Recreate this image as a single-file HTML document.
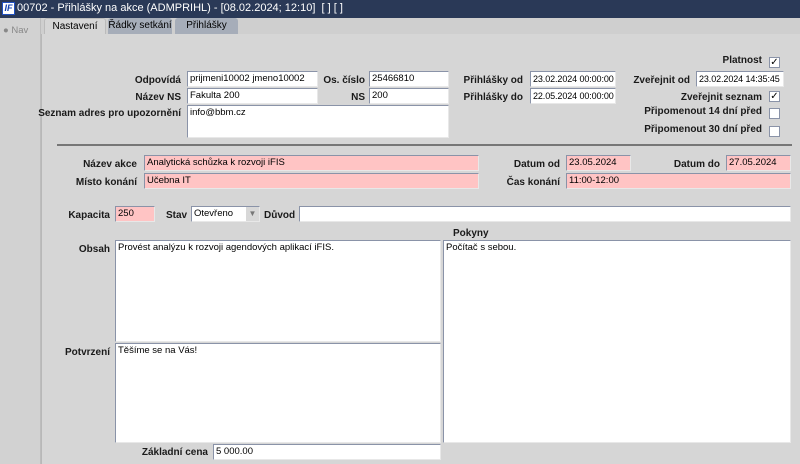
<!DOCTYPE html>
<html><head><meta charset="utf-8"><style>
*{box-sizing:border-box;margin:0;padding:0}
body{width:800px;height:464px;overflow:hidden;background:#d6d6d6;font-family:"Liberation Sans",sans-serif;font-size:10px;color:#000;position:relative}
.a{position:absolute}
.l{position:absolute;font-weight:bold;font-size:10px;text-align:right;white-space:nowrap;color:#1a1a1a}
.i{position:absolute;background:#fff;border:1px solid #8a93a8;border-right-color:#e8e8e8;border-bottom-color:#e8e8e8;font-size:9.5px;padding:1px 2px;white-space:nowrap;overflow:hidden;line-height:12px}
.d{font-size:9px;letter-spacing:-0.1px}
.p{background:#ffc4c4}
.cb{position:absolute;width:11px;height:11px;background:#fff;border:1px solid #8a93a8;font-size:10px;line-height:9px;text-align:center}
.tab{position:absolute;top:18px;height:16px;text-align:center;font-size:10px;line-height:15px;border-radius:3px 3px 0 0;white-space:nowrap}
</style></head><body>
<div class="a" style="left:0;top:0;width:800px;height:18px;background:#2a3957"></div>
<div class="a" style="left:2px;top:2px;width:13px;height:13px;background:#fff;border:1px solid #2050c0;color:#1040b0;font-size:9px;font-weight:bold;font-style:italic;line-height:11px;text-align:center">IF</div>
<div class="a" style="left:17px;top:2px;color:#fff;font-size:11px;white-space:nowrap">00702 - Přihlášky na akce (ADMPRIHL) - [08.02.2024; 12:10] &nbsp;[ ] [ ]</div>
<div class="a" style="left:0;top:18px;width:41px;height:446px;background:#d2d2d2;border-right:1px solid #bdbdbd"></div>
<div class="a" style="left:3px;top:25px;color:#888;font-size:9.5px">● Nav</div>
<div class="a" style="left:41px;top:18px;width:759px;height:16px;background:#cfcfcf"></div>
<div class="tab" style="left:44px;width:62px;background:#d6d6d6;border:1px solid #bbb;border-bottom:none">Nastavení</div>
<div class="tab" style="left:108px;width:64px;background:#a6adb9">Řádky setkání</div>
<div class="tab" style="left:175px;width:63px;background:#a6adb9">Přihlášky</div>
<div class="a" style="left:41px;top:34px;width:1px;height:430px;background:#b8b8b8"></div>

<div class="l" style="right:619px;top:75px">Odpovídá</div>
<div class="i" style="left:187px;top:71px;width:131px;height:16px">prijmeni10002 jmeno10002</div>
<div class="l" style="right:435px;top:75px">Os. číslo</div>
<div class="i" style="left:369px;top:71px;width:80px;height:16px">25466810</div>
<div class="l" style="right:619px;top:92px">Název NS</div>
<div class="i" style="left:187px;top:88px;width:131px;height:16px">Fakulta 200</div>
<div class="l" style="right:435px;top:92px">NS</div>
<div class="i" style="left:369px;top:88px;width:80px;height:16px">200</div>
<div class="l" style="right:619px;top:108px">Seznam adres pro upozornění</div>
<div class="i" style="left:187px;top:105px;width:262px;height:33px">info@bbm.cz</div>

<div class="l" style="right:277px;top:75px">Přihlášky od</div>
<div class="i d" style="left:530px;top:71px;width:86px;height:16px">23.02.2024 00:00:00</div>
<div class="l" style="right:277px;top:92px">Přihlášky do</div>
<div class="i d" style="left:530px;top:88px;width:86px;height:16px">22.05.2024 00:00:00</div>
<div class="l" style="right:110px;top:75px">Zveřejnit od</div>
<div class="i d" style="left:696px;top:71px;width:88px;height:16px">23.02.2024 14:35:45</div>
<div class="l" style="right:38px;top:55px">Platnost</div>
<div class="cb" style="left:769px;top:57px">✓</div>
<div class="l" style="right:38px;top:92px">Zveřejnit seznam</div>
<div class="cb" style="left:769px;top:91px">✓</div>
<div class="l" style="right:38px;top:106px">Připomenout 14 dní před</div>
<div class="cb" style="left:769px;top:108px"></div>
<div class="l" style="right:38px;top:124px">Připomenout 30 dní před</div>
<div class="cb" style="left:769px;top:126px"></div>

<div class="a" style="left:57px;top:144px;width:735px;height:2px;background:#777"></div>

<div class="l" style="right:663px;top:159px">Název akce</div>
<div class="i p" style="left:144px;top:155px;width:335px;height:16px">Analytická schůzka k rozvoji iFIS</div>
<div class="l" style="right:663px;top:177px">Místo konání</div>
<div class="i p" style="left:144px;top:173px;width:335px;height:16px">Učebna IT</div>
<div class="l" style="right:240px;top:159px">Datum od</div>
<div class="i p" style="left:566px;top:155px;width:65px;height:16px">23.05.2024</div>
<div class="l" style="right:80px;top:159px">Datum do</div>
<div class="i p" style="left:726px;top:155px;width:65px;height:16px">27.05.2024</div>
<div class="l" style="right:240px;top:177px">Čas konání</div>
<div class="i p" style="left:566px;top:173px;width:225px;height:16px">11:00-12:00</div>

<div class="l" style="right:690px;top:210px">Kapacita</div>
<div class="i p" style="left:115px;top:206px;width:40px;height:16px">250</div>
<div class="l" style="left:166px;top:210px">Stav</div>
<div class="i" style="left:191px;top:206px;width:69px;height:16px">Otevřeno</div>
<div class="a" style="left:246px;top:207px;width:13px;height:14px;background:#d8d8d8;color:#777;font-size:8px;text-align:center;line-height:14px">▼</div>
<div class="l" style="left:264px;top:210px">Důvod</div>
<div class="i" style="left:299px;top:206px;width:492px;height:16px"></div>

<div class="l" style="left:453px;top:228px">Pokyny</div>
<div class="l" style="right:690px;top:244px">Obsah</div>
<div class="i" style="left:115px;top:240px;width:326px;height:102px">Provést analýzu k rozvoji agendových aplikací iFIS.</div>
<div class="i" style="left:443px;top:240px;width:348px;height:203px">Počítač s sebou.</div>
<div class="l" style="right:690px;top:347px">Potvrzení</div>
<div class="i" style="left:115px;top:343px;width:326px;height:100px">Těšíme se na Vás!</div>
<div class="l" style="right:592px;top:447px">Základní cena</div>
<div class="i" style="left:213px;top:444px;width:228px;height:16px">5 000.00</div>
</body></html>
